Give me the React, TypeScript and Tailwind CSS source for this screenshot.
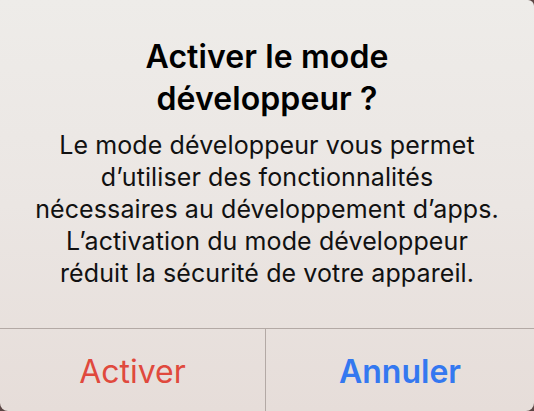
import React from "react";

export default function App() {
  return (
    <div className="w-[534px] h-[411px] overflow-hidden bg-[#5b4644]" style={{ fontFamily: "Inter, 'Liberation Sans', sans-serif" }}>
      <div className="w-full h-full flex flex-col rounded-bl-[8px] rounded-br-[8px] rounded-tr-[6px] bg-gradient-to-b from-[#eeece9] via-[#ebe6e3] to-[#e6ddd9]">
        <div className="flex flex-col items-center h-[328px] pt-[36px] px-2 text-center">
          <div className="text-[32px] leading-[42px] font-semibold text-black tracking-[0.1px]">
            Activer le mode
            <br />
            développeur ?
          </div>
          <div className="mt-[9px] text-[25px] leading-[32px] text-[#111] tracking-[0.1px] whitespace-nowrap">
            Le mode développeur vous permet
            <br />
            d’utiliser des fonctionnalités
            <br />
            nécessaires au développement d’apps.
            <br />
            L’activation du mode développeur
            <br />
            réduit la sécurité de votre appareil.
          </div>
        </div>
        <div className="flex flex-1 border-t border-[#b3a9a5]">
          <div className="w-[266px] flex items-start justify-center pt-[19px] border-r border-[#b3a9a5] text-[32px] leading-[48px] text-[#e0493d]">
            Activer
          </div>
          <div className="flex-1 flex items-start justify-center pt-[19px] text-[32px] leading-[48px] font-semibold text-[#3478f0]">
            Annuler
          </div>
        </div>
      </div>
    </div>
  );
}
